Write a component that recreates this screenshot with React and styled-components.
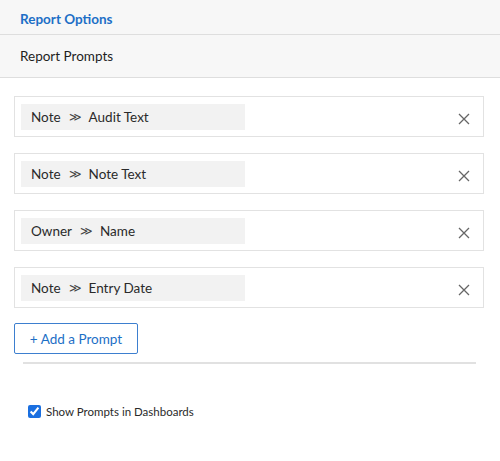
import styled, { createGlobalStyle } from "styled-components";

const GlobalStyle = createGlobalStyle`
  body {
    margin: 0;
    background: #fff;
    font-family: "Lato", "Open Sans", sans-serif;
    color: #222;
  }
`;

const prompts = [
  { table: "Note", field: "Audit Text" },
  { table: "Note", field: "Note Text" },
  { table: "Owner", field: "Name" },
  { table: "Note", field: "Entry Date" },
];

const Page = styled.div`
  width: 500px;
  height: 461px;
  display: flex;
  flex-direction: column;
`;

const SectionBar = styled.div`
  height: ${(p) => p.$height}px;
  box-sizing: border-box;
  display: flex;
  align-items: center;
  padding-left: 20px;
  background: #f7f7f7;
  border-bottom: 1px solid #dedede;
  font-size: 13.5px;
  font-weight: ${(p) => (p.$active ? 700 : 400)};
  color: ${(p) => (p.$active ? "#1d6fc6" : "#1e1e1e")};
  padding-top: ${(p) => (p.$active ? 3 : 0)}px;
`;

const Body = styled.div`
  padding: 18px 16px 0 14px;
  display: flex;
  flex-direction: column;
  gap: 16px;
`;

const PromptRow = styled.div`
  height: 41px;
  box-sizing: border-box;
  border: 1px solid #e2e2e2;
  display: flex;
  align-items: center;
  justify-content: space-between;
  padding: 0 12px 0 6px;
`;

const Chip = styled.div`
  width: 224px;
  height: 26px;
  background: #f2f2f2;
  display: flex;
  align-items: center;
  gap: 6px;
  padding-left: 10px;
  box-sizing: border-box;
  font-size: 13.5px;
  color: #2a2a2a;
`;

const Sep = styled.span`
  font-size: 12px;
  color: #444;
  margin: -1px 1px 0 2px;
`;

const CloseBtn = styled.button`
  border: none;
  background: none;
  padding: 0;
  width: 14px;
  height: 14px;
  display: flex;
  align-items: center;
  justify-content: center;
  cursor: pointer;
  margin-top: 4px;
`;

const AddButton = styled.button`
  align-self: flex-start;
  width: 124px;
  height: 31px;
  margin-top: -1px;
  border: 1px solid #3d7fcf;
  border-radius: 2px;
  background: #fff;
  color: #1d6fc6;
  font-family: "Lato", "Open Sans", sans-serif;
  font-size: 13.5px;
  padding: 0;
  cursor: pointer;
`;

const Divider = styled.hr`
  border: none;
  border-top: 2px solid #e1e1e1;
  margin: -8px 8px 0 9px;
`;

const CheckRow = styled.label`
  display: flex;
  align-items: center;
  gap: 5px;
  margin: 41px 0 0 28px;
  font-size: 11.5px;
  color: #2a2a2a;

  input {
    margin: 0;
    width: 13px;
    height: 13px;
    accent-color: #1a6fe0;
  }
`;

function XIcon() {
  return (
    <svg width="12" height="12" viewBox="0 0 12 12">
      <path d="M1 1L11 11M11 1L1 11" stroke="#666" strokeWidth="1.3" />
    </svg>
  );
}

export default function App() {
  return (
    <Page>
      <GlobalStyle />
      <SectionBar $height={35} $active>
        Report Options
      </SectionBar>
      <SectionBar $height={43}>Report Prompts</SectionBar>
      <Body>
        {prompts.map((p, i) => (
          <PromptRow key={i}>
            <Chip>
              {p.table}
              <Sep>≫</Sep>
              {p.field}
            </Chip>
            <CloseBtn aria-label="Remove">
              <XIcon />
            </CloseBtn>
          </PromptRow>
        ))}
        <AddButton>+ Add a Prompt</AddButton>
        <Divider />
      </Body>
      <CheckRow>
        <input type="checkbox" defaultChecked />
        Show Prompts in Dashboards
      </CheckRow>
    </Page>
  );
}
